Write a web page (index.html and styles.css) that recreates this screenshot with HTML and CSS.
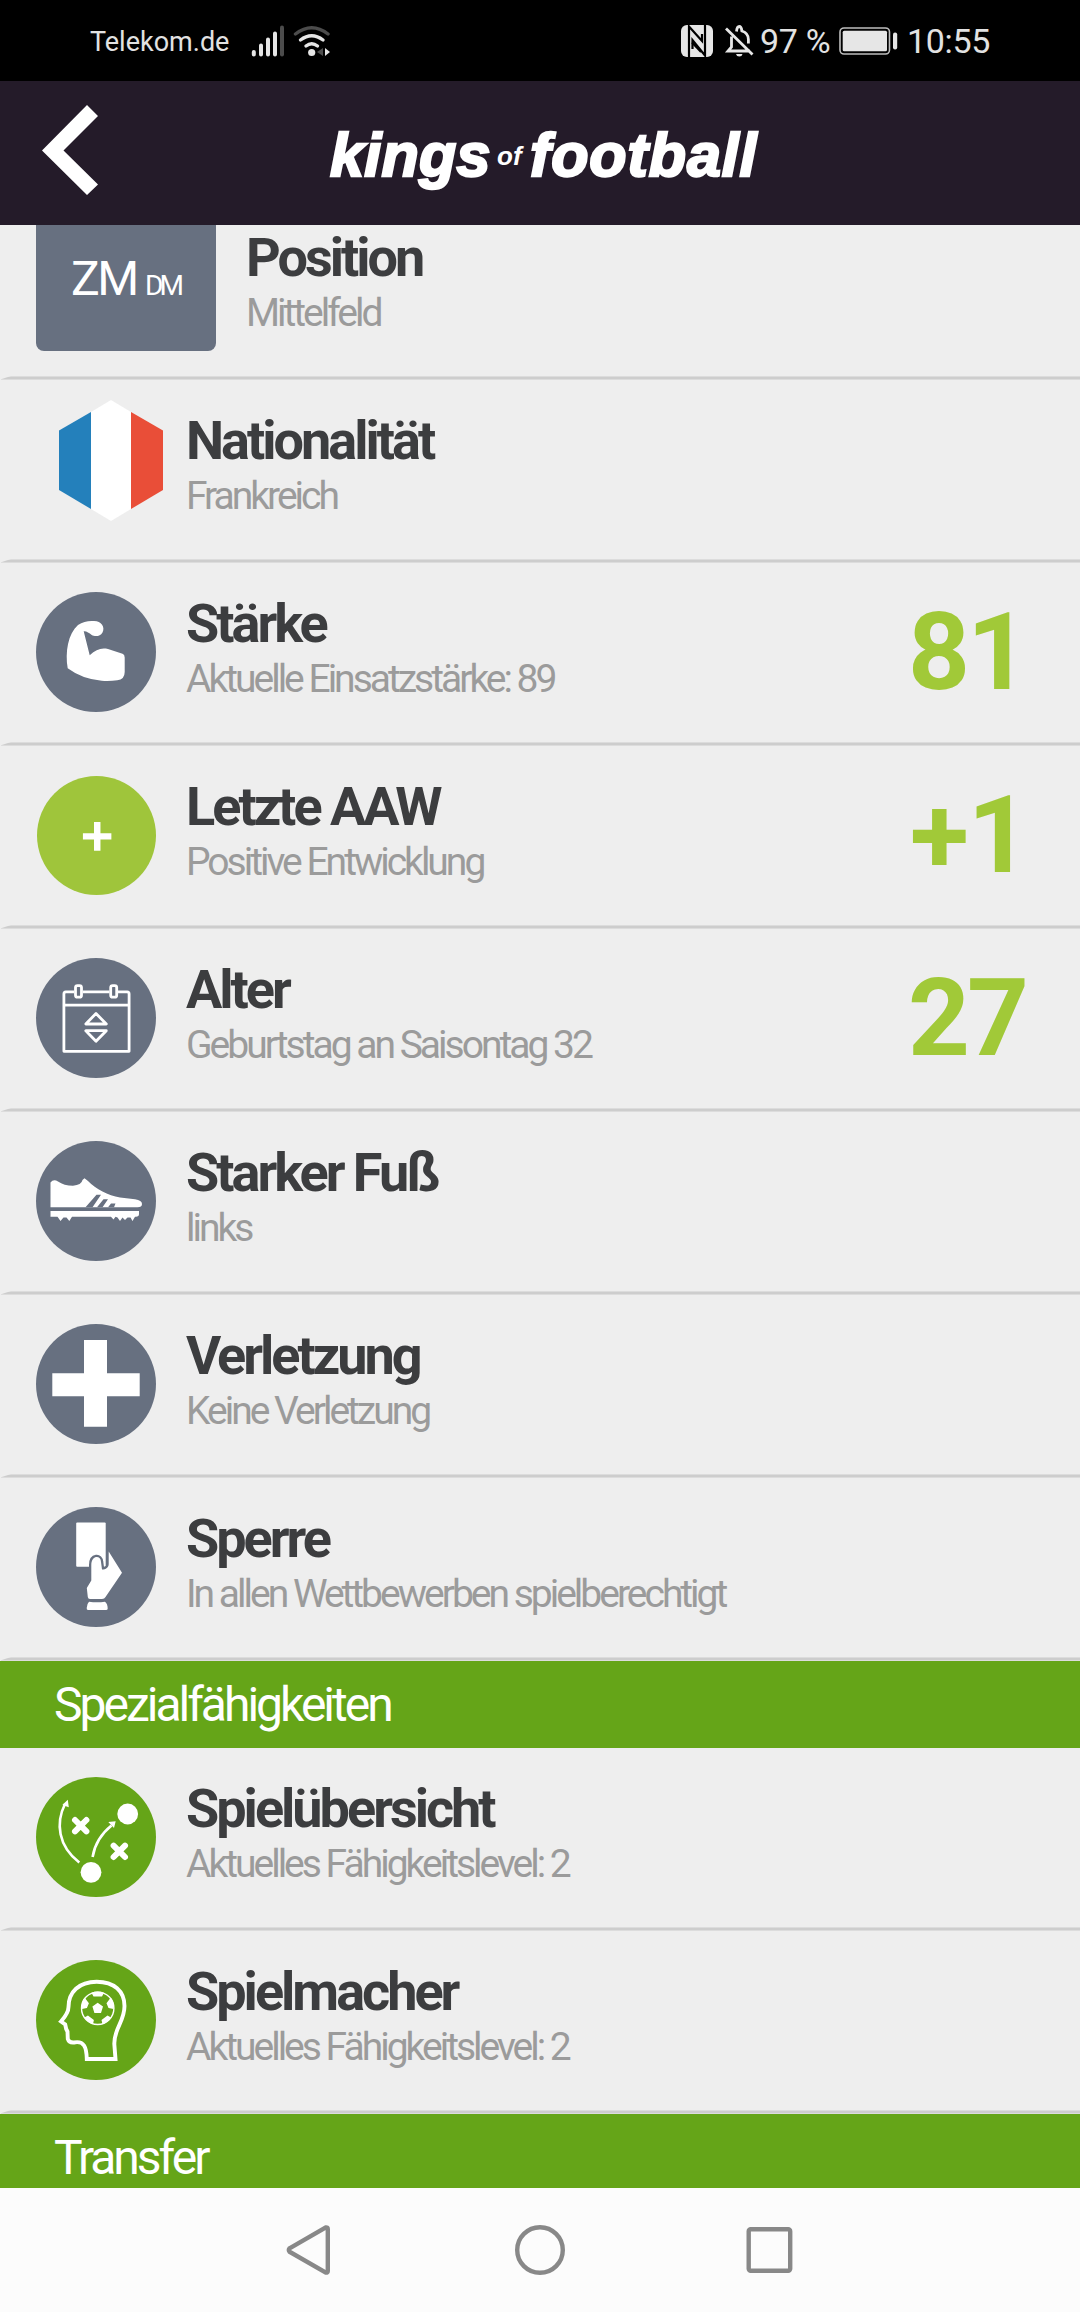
FILE: index.html
```
<!DOCTYPE html>
<html lang="de">
<head>
<meta charset="utf-8">
<title>Kings of Football</title>
<link rel="stylesheet" href="styles.css">
</head>
<body>
<header class="status">
  <span class="carrier">Telekom.de</span>
  <svg class="signal" width="82" height="34" viewBox="250 23 82 34">
    <g stroke="#e6e6e6" stroke-width="4" stroke-linecap="round">
      <path d="M253.8 51v2.5M261 44.500v9M268 38.500v15M275 32.500v21"/>
      <path d="M282 26.500v27" stroke="#4c4c4c"/>
    </g>
    <g fill="none" stroke="#e6e6e6" stroke-width="3.400" stroke-linecap="round">
      <path d="M295.500 33Q311.700 20.500 328 33" stroke="#4c4c4c"/>
      <path d="M300.500 39Q311.700 30.500 323 39M306 45Q311.700 40.500 317.500 45"/>
    </g>
    <circle cx="311.700" cy="51.500" r="3.600" fill="#e6e6e6"/>
    <path d="M323 47v8l-6-4z" fill="#4c4c4c"/>
    <path d="M325 47v8l5-4z" fill="#e6e6e6"/>
  </svg>
  <div class="indicators">
    <svg class="nfc" width="32" height="32" viewBox="0 0 32 32">
      <rect width="32" height="32" rx="6" fill="#e6e6e6"/>
      <path d="M8 32V1.500L21 16V9M24 0v30.500L11.500 15v9" fill="none" stroke="#000" stroke-width="2.200"/>
      <path d="M11 17.500L20 27" stroke="#000" stroke-width="2"/>
    </svg>
    <svg class="bell" width="30" height="34" viewBox="724 23 30 34">
      <g fill="none" stroke="#e6e6e6" stroke-width="2.800">
        <path d="M726 27.500L752.500 53.500M731.500 35.500v10.500L728 50h22M736.500 30.500q.5-5 2.700-5t2.700 4.500q6.500 2 6.500 8.500v4"/>
      </g>
      <path d="M736 53h6.500q-.5 2.500-3.200 2.500t-3.300-2.500z" fill="#e6e6e6"/>
    </svg>
    <span class="percent">97 %</span>
    <svg class="battery" width="60" height="28" viewBox="0 0 60 28">
      <rect x="1" y="1" width="49.500" height="26" rx="4" fill="none" stroke="#bdbdbd" stroke-width="1.600"/>
      <rect x="3.700" y="3.700" width="44.300" height="20.600" rx="1.500" fill="#e6e6e6"/>
      <rect x="54" y="5.500" width="4.200" height="17" rx="2" fill="#e6e6e6"/>
    </svg>
    <span class="clock">10:55</span>
  </div>
</header>

<nav class="appbar">
  <svg class="back" width="57" height="90" viewBox="0 0 57 90">
    <path d="M45 0L56 11L21.500 45.500L56 79.500L45 90L0 45.500z" fill="#fff"/>
  </svg>
  <h1 class="logo"><span class="kings">kings</span><span class="of">of</span><span class="football">football</span></h1>
</nav>

<main class="scroller">
  <section class="row first">
    <div class="badge"><span class="main-pos">ZM</span><span class="alt-pos">DM</span></div>
    <div class="info"><h2>Position</h2><p>Mittelfeld</p></div>
  </section>

  <section class="row">
    <svg class="flag" width="104" height="121" viewBox="0 0 104 121">
      <path d="M0 30.500L32 12v97L0 90z" fill="#2480bb"/>
      <path d="M32 12L52 0L72 12v97L52 121L32 109z" fill="#fff"/>
      <path d="M72 12l32 18.500V90L72 109z" fill="#e94e38"/>
    </svg>
    <div class="info"><h2>Nationalität</h2><p>Frankreich</p></div>
  </section>

  <section class="row">
    <svg class="icon slate" viewBox="0 0 120 120">
      <path d="M31.700 76.300C29 60 32 42 42 33Q49 28.500 57.300 29C65 28.500 69.500 35 66.500 40.500C64 45 58.500 44.500 55.700 43C53 41 50.500 39 47.700 39.300L53.700 63.300C60 57.500 65 55.500 72 57L86.500 61.700Q88.700 62.500 88.700 65.500V80Q88.700 87.500 81.300 88.300Q74 89.300 65.700 88.800Q46 87 31.700 76.300z"/>
    </svg>
    <div class="info"><h2>Stärke</h2><p>Aktuelle Einsatzstärke: 89</p></div>
    <strong class="value">81</strong>
  </section>

  <section class="row">
    <svg class="icon lime" viewBox="0 0 120 120">
      <path d="M57.500 46.500h6.500v11.200H75v6.300H64V75.500H57.500V64H46.300V57.700H57.500z"/>
    </svg>
    <div class="info"><h2>Letzte AAW</h2><p>Positive Entwicklung</p></div>
    <strong class="value signed">+1</strong>
  </section>

  <section class="row">
    <svg class="icon slate" viewBox="0 0 120 120">
      <g fill="none" stroke="#fff" stroke-width="2.800" stroke-linejoin="round">
        <path d="M38 33.800H29.800Q27.900 33.800 27.900 36V93.300H93.100V36Q93.100 33.800 91.200 33.800H82M47 33.800H73.500M28 47.200H93"/>
        <rect x="39.500" y="27.600" width="6" height="11.600" rx="2"/>
        <rect x="74.700" y="27.600" width="6" height="11.600" rx="2"/>
        <path d="M60 55.500L70.300 66H49.800zM49.800 72.700H70.300L60 83.300z"/>
      </g>
    </svg>
    <div class="info"><h2>Alter</h2><p>Geburtstag an Saisontag 32</p></div>
    <strong class="value">27</strong>
  </section>

  <section class="row">
    <svg class="icon slate" viewBox="0 0 120 120">
      <path d="M14.500 66.300V41.500Q17.500 37.500 22 40.500Q28 44.700 37 44.700Q45.500 44 46.500 39L48.500 37.300L52 40C60 48 72 54.500 84 56.500L99 58.300Q106 59.500 106 63Q106 66.300 101.500 66.300z"/>
      <path d="M14.500 70H103V73Q103 75.700 100 75.700H99L96.500 80L94.500 76.500H91.500L89 79L86.500 76.500L84 80L81.500 76.500L79.500 75.700L77.500 78.500L75 75.700H36L33.300 80L30.500 76.500L27.500 76.500L24.500 80L21.500 75.700H14.500z"/>
      <path d="M49.500 66.300L60.500 53.700H65L56.500 66.300zM61 66.300L67.500 58.300H72L66.500 66.300zM72 66.300L75 62.500H79.500L78 66.300z" fill="#677080"/>
    </svg>
    <div class="info"><h2>Starker Fuß</h2><p>links</p></div>
  </section>

  <section class="row">
    <svg class="icon slate" viewBox="0 0 120 120">
      <path d="M48 16H71V49.300H103.700V72.300H71V102.700H48V72.300H16.300V49.300H48z"/>
    </svg>
    <div class="info"><h2>Verletzung</h2><p>Keine Verletzung</p></div>
  </section>

  <section class="row">
    <svg class="icon slate" viewBox="0 0 120 120">
      <rect x="40.200" y="15.600" width="29.500" height="44.200" rx="1"/>
      <path d="M55.300 58C55.300 48 65 48 65 55L66 62.500C70 62.500 72.700 60.500 72.700 57V44.500L86 65.700L69.500 90Q68.500 92 66 92H54Q52 92 51.800 90L50.800 81L55.300 73.500z" stroke="#677080" stroke-width="4.600" paint-order="stroke"/>
      <path d="M53 94.700Q61 96 69 94.700Q71.700 97 71.700 101.500Q71.700 103 70 103H52Q50.500 103 50.700 101Q50.700 97 53 94.700z"/>
    </svg>
    <div class="info"><h2>Sperre</h2><p>In allen Wettbewerben spielberechtigt</p></div>
  </section>

  <h3 class="section-title">Spezialfähigkeiten</h3>

  <section class="row">
    <svg class="icon green" viewBox="0 0 120 120">
      <circle cx="91.700" cy="37" r="10.400"/>
      <circle cx="55" cy="95.300" r="10.400"/>
      <path d="M39 43L50.400 54.400M50.400 43L39 54.400M77.600 68.600L89 80M89 68.600L77.600 80" fill="none" stroke="#fff" stroke-width="6" stroke-linecap="round"/>
      <path d="M43.300 85.500C22 69 19.500 46 29 27M56.600 80C58.500 68 65 57 75.500 48.500" fill="none" stroke="#fff" stroke-width="2.600"/>
      <path d="M26.300 28L31.800 22.700L32.800 30.200zM72.300 45L79.700 44.300L78 51z"/>
    </svg>
    <div class="info"><h2>Spielübersicht</h2><p>Aktuelles Fähigkeitslevel: 2</p></div>
  </section>

  <section class="row">
    <svg class="icon green" viewBox="0 0 120 120">
      <path d="M50.800 99H79.500L78.300 84C78 68 88.500 62 88.500 46C88.500 31 78 21.700 60.700 21.700C43 21.700 32.500 32 32.500 47Q32.500 53 25 61.500L29.200 64.500L30.200 69L31.500 71.500L31.800 79Q33 83 38 82.500C48 80.500 50.500 87 50.800 99z" fill="none" stroke="#fff" stroke-width="3.900"/>
      <circle cx="61.700" cy="48.300" r="16.200" fill="none" stroke="#fff" stroke-width="1.400"/>
      <path d="M61.700 42.700L67 46.500L65 53H58.400L56.400 46.500zM55.500 32.700Q61.700 30.500 68 32.700L66 36.500H57.500zM70.500 43.300L74.800 37.500Q78.500 42 77.500 49L72.500 48zM52.900 43.300L48.600 37.500Q45 42 45.900 49L50.900 48zM65.500 60L71.500 55.500L75 57.500Q72 62.500 66.500 64.300zM57.900 60L51.900 55.500L48.400 57.500Q51.500 62.500 57 64.300z"/>
    </svg>
    <div class="info"><h2>Spielmacher</h2><p>Aktuelles Fähigkeitslevel: 2</p></div>
  </section>

  <h3 class="section-title">Transfer</h3>
</main>

<footer class="navbar">
  <svg width="54" height="54" viewBox="281 2223 54 54"><path d="M289.500 2248.300L325.500 2227.500Q327.800 2227 327.800 2229V2271Q327.800 2273 325.500 2272.500L289.500 2251.700Q288.200 2250 289.500 2248.300z"/></svg>
  <svg width="54" height="54" viewBox="0 0 54 54"><circle cx="27" cy="27" r="22.800"/></svg>
  <svg width="54" height="54" viewBox="0 0 54 54"><rect x="3.700" y="6.200" width="41.500" height="41.500" rx="2"/></svg>
</footer>
</body>
</html>
```
FILE: styles.css
```
* {
  box-sizing: border-box;
  margin: 0;
  padding: 0;
}

body {
  display: flex;
  flex-direction: column;
  width: 1080px;
  height: 2312px;
  overflow: hidden;
  background: #eee;
  font-family: Roboto, "Liberation Sans", sans-serif;
}

.status {
  display: flex;
  align-items: center;
  flex: 0 0 81px;
  padding: 1px 90px 0;
  background: #000;
  color: #e2e2e2;
}

.carrier {
  width: 160px;
  padding-top: 2px;
  font-size: 27px;
}

.signal,
.nfc,
.bell,
.battery {
  display: block;
  flex-shrink: 0;
  margin-top: -1px;
}

.indicators {
  display: flex;
  align-items: center;
  width: 309px;
  margin-left: auto;
  font-size: 34px;
  letter-spacing: -0.3px;
  white-space: nowrap;
}

.indicators .percent {
  flex: 0 0 85px;
  padding-left: 6px;
}

.bell {
  margin-left: 11px;
}

.indicators .clock {
  margin-left: 8px;
}

.appbar {
  display: flex;
  flex: 0 0 144px;
  padding: 24px 0 0 42px;
  background: #241b29;
}

.logo {
  display: flex;
  align-items: baseline;
  height: 90px;
  margin-left: 231px;
  color: #fff;
  font: italic 700 61px/100px "Liberation Sans", Arial, sans-serif;
  -webkit-text-stroke: 2.4px #fff;
}

.kings {
  width: 167px;
  letter-spacing: 0.3px;
}

.of {
  width: 33px;
  font-size: 26px;
  line-height: 30px;
  transform: translateY(-11px);
  -webkit-text-stroke: 0;
}

.football {
  letter-spacing: 0.9px;
}

.scroller {
  flex: 0 0 1963px;
  overflow: hidden;
}

.row {
  position: relative;
  display: flex;
  height: 183px;
  background: #eee;
}

.row.first {
  margin-top: -28px;
}

/* tapered divider along the bottom edge */
.row::after {
  content: "";
  position: absolute;
  inset: auto 0 0 1px;
  height: 4px;
  background: linear-gradient(#dcdcdc 1px, #cdcdcd 1px, #cdcdcd 3px, #dcdcdc 3px);
  clip-path: polygon(0 100%, 0 80%, 10px 0, 100% 0, 100% 100%);
}

.badge {
  display: flex;
  align-items: baseline;
  width: 180px;
  height: 154px;
  margin-left: 36px;
  padding: 52px 0 0 35px;
  border-radius: 0 0 8px 8px;
  background: #677080;
  color: #fff;
  line-height: 60px;
  letter-spacing: -2.4px;
}

.main-pos {
  width: 74px;
  font-size: 48px;
}

.alt-pos {
  font-size: 28px;
  letter-spacing: -3.8px;
}

.icon {
  width: 120px;
  height: 120px;
  margin: 29px 0 0 36px;
  border-radius: 50%;
  fill: #fff;
}

.slate {
  background: #677080;
}

.lime {
  width: 119px;
  height: 119px;
  margin: 30px 0 0 37px;
  background: #9fc53b;
}

.green {
  background: #65a518;
}

.flag {
  margin: 20px -7px 0 59px;
}

.info {
  padding: 31px 0 0 30px;
  letter-spacing: -3px;
  white-space: nowrap;
}

.info h2 {
  color: #3c3d3f;
  font-size: 54px;
  font-weight: 700;
  line-height: 60px;
}

.info p {
  color: #9b9b9b;
  font-size: 39px;
  line-height: 50px;
}

.value {
  width: 172px;
  margin-left: auto;
  color: #a1c938;
  font-size: 108px;
  line-height: 179px;
  letter-spacing: -3px;
}

.value.signed {
  padding-left: 2px;
  letter-spacing: -1px;
}

.section-title {
  height: 87px;
  padding-left: 54px;
  background: #65a518;
  color: #fff;
  font-size: 48px;
  font-weight: 400;
  line-height: 87px;
  letter-spacing: -3px;
}

.navbar {
  display: flex;
  gap: 178px;
  align-items: center;
  flex: 0 0 124px;
  padding-left: 281px;
  background: #fcfcfc;
}

.navbar svg {
  fill: none;
  stroke: #888;
  stroke-width: 4.400px;
}
```
